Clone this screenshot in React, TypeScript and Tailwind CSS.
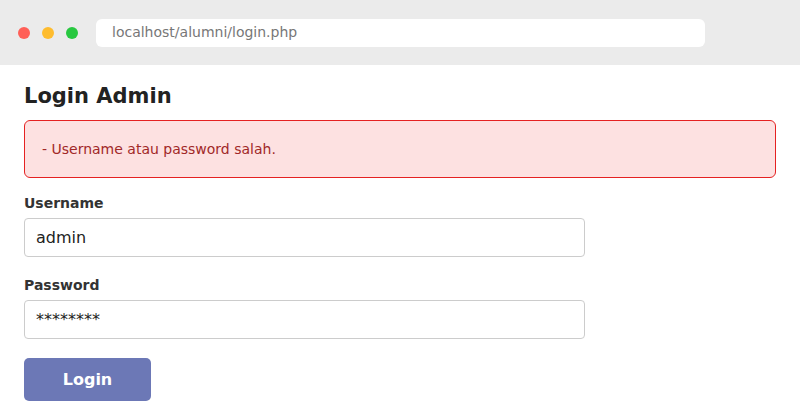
import React from 'react';

function App() {
  return (
    <div className="w-[800px] h-[418px] bg-white overflow-hidden" style={{ fontFamily: '"DejaVu Sans", sans-serif' }}>
      {/* browser chrome */}
      <div className="h-[65px] bg-[#ebebeb] flex items-center px-[18px]">
        <div className="flex gap-[12px]">
          <span className="w-[12px] h-[12px] rounded-full bg-[#ff5f57]" />
          <span className="w-[12px] h-[12px] rounded-full bg-[#febc2e]" />
          <span className="w-[12px] h-[12px] rounded-full bg-[#28c840]" />
        </div>
        <div className="ml-[18px] w-[609px] h-[28px] bg-white rounded-[6px] flex items-center px-[16px] text-[14px] text-[#777]">
          localhost/alumni/login.php
        </div>
      </div>

      {/* page */}
      <div className="px-[24px] pt-[18px]">
        <h1 className="text-[21px] leading-[26px] font-bold text-[#222]">Login Admin</h1>
        <div className="mt-[11px] h-[58px] border border-[#e52222] bg-[#fde1e1] rounded-[6px] flex items-center px-[17px] text-[14px] text-[#a12828]">
          - Username atau password salah.
        </div>

        <form className="mt-[17px]">
          <label className="block text-[14px] leading-[17px] font-bold text-[#333]">Username</label>
          <input
            className="mt-[6px] block w-[561px] h-[39px] border border-[#ccc] rounded-[4px] px-[11px] text-[16px] text-[#222] outline-none"
            defaultValue="admin"
          />
          <label className="mt-[20px] block text-[14px] leading-[17px] font-bold text-[#333]">Password</label>
          <input
            type="text"
            className="mt-[6px] block w-[561px] h-[39px] border border-[#ccc] rounded-[4px] px-[11px] text-[16px] text-[#222] outline-none"
            defaultValue="********"
          />
          <button
            type="button"
            className="mt-[19px] w-[127px] h-[43px] rounded-[5px] bg-[#6c78b6] text-white font-bold text-[16px]"
          >
            Login
          </button>
        </form>
      </div>
    </div>
  );
}

export default App;
